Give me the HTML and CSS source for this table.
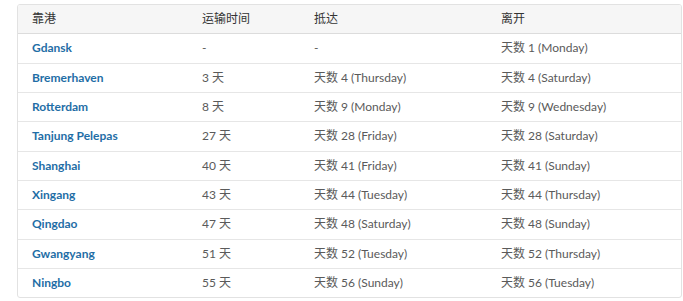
FILE: index.html
```html
<!DOCTYPE html>
<html>

<head>
  <meta charset="utf-8">
  <link rel="stylesheet" href="styles.css">
</head>

<body>
  <div class="wrap">
    <table class="ports">
      <thead>
        <tr>
          <th class="c1">靠港</th>
          <th class="c2">运输时间</th>
          <th class="c3">抵达</th>
          <th class="c4">离开</th>
        </tr>
      </thead>
      <tbody>
        <tr><td><a href="#">Gdansk</a></td><td>-</td><td>-</td><td>天数 1 (Monday)</td></tr>
        <tr><td><a href="#">Bremerhaven</a></td><td>3 天</td><td>天数 4 (Thursday)</td><td>天数 4 (Saturday)</td></tr>
        <tr><td><a href="#">Rotterdam</a></td><td>8 天</td><td>天数 9 (Monday)</td><td>天数 9 (Wednesday)</td></tr>
        <tr><td><a href="#">Tanjung Pelepas</a></td><td>27 天</td><td>天数 28 (Friday)</td><td>天数 28 (Saturday)</td></tr>
        <tr><td><a href="#">Shanghai</a></td><td>40 天</td><td>天数 41 (Friday)</td><td>天数 41 (Sunday)</td></tr>
        <tr><td><a href="#">Xingang</a></td><td>43 天</td><td>天数 44 (Tuesday)</td><td>天数 44 (Thursday)</td></tr>
        <tr><td><a href="#">Qingdao</a></td><td>47 天</td><td>天数 48 (Saturday)</td><td>天数 48 (Sunday)</td></tr>
        <tr><td><a href="#">Gwangyang</a></td><td>51 天</td><td>天数 52 (Tuesday)</td><td>天数 52 (Thursday)</td></tr>
        <tr><td><a href="#">Ningbo</a></td><td>55 天</td><td>天数 56 (Sunday)</td><td>天数 56 (Tuesday)</td></tr>
      </tbody>
    </table>
  </div>
</body>

</html>
```

FILE: styles.css
```css
body {
  margin: 0;
  background: #ffffff;
  font-family: Lato, "Noto Sans CJK SC", sans-serif;
  color: #5a5a5a;
}

.wrap {
  padding: 4px 1px 0 17px;
}

table.ports {
  width: 665px;
  border-collapse: separate;
  border-spacing: 0;
  border: 1px solid #e2e2e2;
  border-radius: 3px;
  table-layout: fixed;
  overflow: hidden;
  font-size: 12px;
}

table.ports th,
table.ports td {
  text-align: left;
  padding: 7px 14px;
  line-height: 14.33px;
  height: 14.33px;
  white-space: nowrap;
}

table.ports th {
  background-color: #f6f6f6;
  color: #333333;
  font-weight: normal;
  border-bottom: 1px solid #dcdcdc;
}

table.ports td {
  border-bottom: 1px solid #e6e6e6;
}

table.ports tbody tr:last-child td {
  border-bottom: none;
}

th.c1 { width: 142px; }
th.c2 { width: 84px; }
th.c3 { width: 159px; }

table.ports a {
  color: #1f6ea6;
  font-weight: bold;
  text-decoration: none;
}
```
